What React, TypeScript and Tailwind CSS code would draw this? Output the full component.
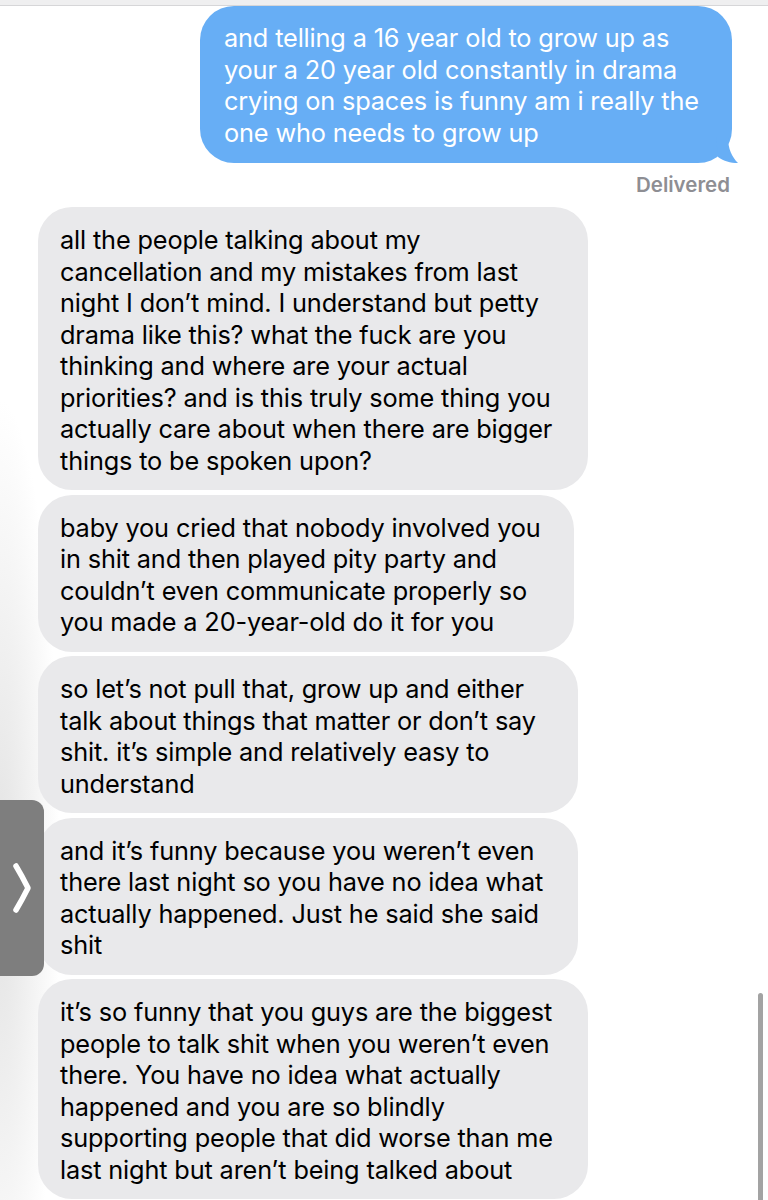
import React from "react";

const grayBubbles: { lines: string[]; w: number }[] = [
  {
    w: 550,
    lines: [
      "all the people talking about my",
      "cancellation and my mistakes from last",
      "night I don’t mind. I understand but petty",
      "drama like this? what the fuck are you",
      "thinking and where are your actual",
      "priorities? and is this truly some thing you",
      "actually care about when there are bigger",
      "things to be spoken upon?",
    ],
  },
  {
    w: 536,
    lines: [
      "baby you cried that nobody involved you",
      "in shit and then played pity party and",
      "couldn’t even communicate properly so",
      "you made a 20-year-old do it for you",
    ],
  },
  {
    w: 540,
    lines: [
      "so let’s not pull that, grow up and either",
      "talk about things that matter or don’t say",
      "shit. it’s simple and relatively easy to",
      "understand",
    ],
  },
  {
    w: 540,
    lines: [
      "and it’s funny because you weren’t even",
      "there last night so you have no idea what",
      "actually happened. Just he said she said",
      "shit",
    ],
  },
  {
    w: 550,
    lines: [
      "it’s so funny that you guys are the biggest",
      "people to talk shit when you weren’t even",
      "there. You have no idea what actually",
      "happened and you are so blindly",
      "supporting people that did worse than me",
      "last night but aren’t being talked about",
    ],
  },
];

export default function App() {
  return (
    <div className="relative w-[768px] h-[1200px] overflow-hidden bg-white font-['Inter','Liberation_Sans',sans-serif]">
      {/* soft shade on left */}
      <div className="pointer-events-none absolute left-0 top-[380px] w-[140px] h-[1000px] bg-[radial-gradient(ellipse_60px_480px_at_0px_500px,#e2e2e2_0%,rgba(255,255,255,0)_100%)]" />

      <div className="relative flex flex-col">
        <div className="h-[6px] bg-[#efeff0] border-b border-[#d6d6d8]" />

        {/* sent bubble */}
        <div className="flex justify-end pr-[36px]">
          <div className="relative w-[532px] rounded-[34px] bg-[#67aef5] pl-[24px] pr-[10px] pt-[16px] pb-[15px] text-[25.3px] leading-[31.6px] tracking-[-0.15px] text-white">
            <div className="whitespace-nowrap">and telling a 16 year old to grow up as</div>
            <div className="whitespace-nowrap">your a 20 year old constantly in drama</div>
            <div className="whitespace-nowrap">crying on spaces is funny am i really the</div>
            <div className="whitespace-nowrap">one who needs to grow up</div>
            <svg className="absolute right-[-10px] bottom-0" width="26" height="26" viewBox="0 0 26 26">
              <path d="M0 0 L12 0 C12 12 16 20 22 26 C14 26 8 24 2 20 Z" fill="#67aef5" />
            </svg>
          </div>
        </div>

        <div className="flex justify-end pr-[38px] mt-[10px]">
          <span className="text-[20.5px] leading-[24px] font-semibold text-[#8e8e93]">Delivered</span>
        </div>

        {/* received bubbles */}
        <div className="mt-[10px] ml-[38px] flex flex-col gap-[4.5px]">
          {grayBubbles.map((b, i) => (
            <div
              key={i}
              className="rounded-[34px] bg-[#e9e9eb] pl-[22px] pr-[10px] pt-[17px] pb-[14px] text-[25.3px] leading-[31.5px] tracking-[-0.15px] text-black"
              style={{ width: b.w }}
            >
              {b.lines.map((l, j) => (
                <div key={j} className="whitespace-nowrap">
                  {l}
                </div>
              ))}
            </div>
          ))}
        </div>
      </div>

      {/* left tab */}
      <div className="absolute left-0 top-[800px] w-[44px] h-[176px] rounded-r-[12px] bg-[#7e7e7e]">
        <svg className="absolute left-0 top-0" width="44" height="176" viewBox="0 0 44 176">
          <path d="M16 66 Q22 76 28 88 Q22 100 16 110" fill="none" stroke="#ffffff" strokeWidth="5.5" strokeLinecap="round" strokeLinejoin="round" />
        </svg>
      </div>

      {/* scrollbar */}
      <div className="absolute left-[758px] top-[993px] w-[5px] h-[220px] rounded-full bg-[#a3a3a3]" />
    </div>
  );
}
